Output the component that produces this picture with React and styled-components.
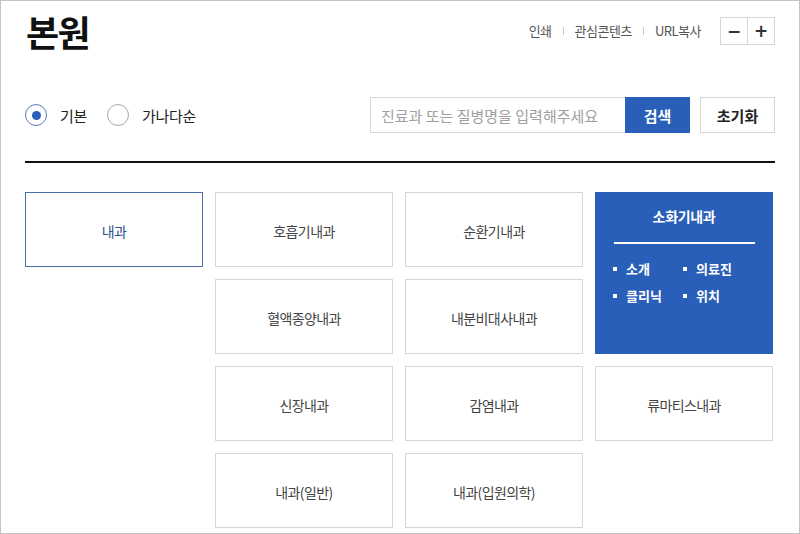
import React from "react";
import styled, { createGlobalStyle } from "styled-components";

const Global = createGlobalStyle`
  html, body { margin: 0; padding: 0; background: #fff; }
  body { font-family: "Noto Sans CJK KR", "Noto Sans", sans-serif; }
  * { box-sizing: border-box; }
`;

const BLUE = "#2a5fb9";

const Frame = styled.div`
  width: 800px;
  height: 534px;
  border: 1px solid #c4c4c4;
  padding: 0 24px;
  overflow: hidden;
  display: flex;
  flex-direction: column;
`;

const Header = styled.div`
  height: 60px;
  display: flex;
  justify-content: space-between;
  align-items: flex-start;
`;

const Title = styled.h1`
  margin: 9px 0 0 1px;
  font-size: 36px;
  line-height: 42px;
  font-weight: 700;
  color: #111;
  letter-spacing: -1.5px;
`;

const Utils = styled.div`
  margin-top: 16px;
  display: flex;
  align-items: center;
  height: 28px;
`;

const UtilLink = styled.span`
  font-size: 13px;
  color: #555;
  letter-spacing: -0.5px;
  line-height: 28px;
`;

const Sep = styled.span`
  width: 1px;
  height: 8px;
  background: #c8c8c8;
  margin: 0 11px;
`;

const ZoomGroup = styled.div`
  display: flex;
  margin-left: 19px;
`;

const ZoomBtn = styled.button`
  width: 28px;
  height: 28px;
  border: 1px solid #d5d5d5;
  margin-left: ${(p) => (p.$first ? "0" : "-1px")};
  background: #fff;
  padding: 0;
  font-family: "DejaVu Sans", sans-serif;
  font-size: 17px;
  font-weight: 700;
  color: #333;
  display: flex;
  align-items: center;
  justify-content: center;
`;

const Controls = styled.div`
  margin-top: 36px;
  height: 36px;
  display: flex;
  justify-content: space-between;
  align-items: center;
`;

const Radios = styled.div`
  display: flex;
  align-items: center;
  gap: 20px;
`;

const RadioLabel = styled.label`
  display: flex;
  align-items: center;
  gap: 13px;
  font-size: 15px;
  color: #222;
  letter-spacing: -0.3px;
`;

const Circle = styled.span`
  width: 22px;
  height: 22px;
  border-radius: 50%;
  border: 1.5px solid ${(p) => (p.$checked ? "#5c7cb8" : "#aaa")};
  display: flex;
  align-items: center;
  justify-content: center;
  &::after {
    content: "";
    width: 9px;
    height: 9px;
    border-radius: 50%;
    background: ${(p) => (p.$checked ? BLUE : "transparent")};
  }
`;

const Search = styled.div`
  display: flex;
  align-items: center;
`;

const Input = styled.input`
  width: 255px;
  height: 36px;
  border: 1px solid #d9d9d9;
  border-right: none;
  padding: 0 0 0 10px;
  font-family: inherit;
  font-size: 15px;
  color: #333;
  outline: none;
  &::placeholder { color: #a0a0a0; }
`;

const Btn = styled.button`
  height: 36px;
  width: ${(p) => p.$w}px;
  margin-left: ${(p) => p.$ml || 0}px;
  border: 1px solid ${(p) => (p.$primary ? BLUE : "#d5d5d5")};
  background: ${(p) => (p.$primary ? BLUE : "#fff")};
  color: ${(p) => (p.$primary ? "#fff" : "#222")};
  font-family: inherit;
  font-size: 15px;
  font-weight: 700;
  padding: 0;
`;

const Divider = styled.div`
  margin-top: 28px;
  height: 2px;
  background: #111;
`;

const Grid = styled.div`
  margin-top: 29px;
  display: grid;
  grid-template-columns: repeat(4, 178px);
  grid-auto-rows: 75px;
  column-gap: 12px;
  row-gap: 12px;
`;

const Card = styled.div`
  grid-column: ${(p) => p.$col};
  grid-row: ${(p) => p.$row};
  border: 1px solid ${(p) => (p.$active ? "#4a6ea8" : "#d6d6d6")};
  color: ${(p) => (p.$active ? "#2d4f8a" : "#444")};
  font-size: 14px;
  letter-spacing: -0.6px;
  padding-top: 2px;
  display: flex;
  align-items: center;
  justify-content: center;
`;

const OpenCard = styled.div`
  grid-column: 4;
  grid-row: 1 / span 2;
  background: ${BLUE};
  color: #fff;
  padding: 14px 18px 0 18px;
`;

const OpenTitle = styled.div`
  text-align: center;
  font-size: 14px;
  font-weight: 700;
  line-height: 20px;
  letter-spacing: -0.3px;
`;

const Rule = styled.div`
  margin: 16px 0 0 1px;
  height: 2px;
  background: #fff;
`;

const SubList = styled.ul`
  list-style: none;
  margin: 15px 0 0 0;
  padding: 0;
  display: grid;
  grid-template-columns: 70px 1fr;
  row-gap: 7px;
`;

const SubItem = styled.li`
  display: flex;
  align-items: center;
  font-size: 13px;
  font-weight: 700;
  line-height: 20px;
  &::before {
    content: "";
    width: 4px;
    height: 4px;
    background: #fff;
    margin-right: 9px;
  }
`;

const cards = [
  { t: "내과", col: 1, row: 1, active: true },
  { t: "호흡기내과", col: 2, row: 1 },
  { t: "순환기내과", col: 3, row: 1 },
  { t: "혈액종양내과", col: 2, row: 2 },
  { t: "내분비대사내과", col: 3, row: 2 },
  { t: "신장내과", col: 2, row: 3 },
  { t: "감염내과", col: 3, row: 3 },
  { t: "류마티스내과", col: 4, row: 3 },
  { t: "내과(일반)", col: 2, row: 4 },
  { t: "내과(입원의학)", col: 3, row: 4 },
];

export default function App() {
  return (
    <>
      <Global />
      <Frame>
        <Header>
          <Title>본원</Title>
          <Utils>
            <UtilLink>인쇄</UtilLink>
            <Sep />
            <UtilLink>관심콘텐츠</UtilLink>
            <Sep />
            <UtilLink>URL복사</UtilLink>
            <ZoomGroup>
              <ZoomBtn $first>−</ZoomBtn>
              <ZoomBtn>+</ZoomBtn>
            </ZoomGroup>
          </Utils>
        </Header>
        <Controls>
          <Radios>
            <RadioLabel>
              <Circle $checked />
              기본
            </RadioLabel>
            <RadioLabel>
              <Circle />
              가나다순
            </RadioLabel>
          </Radios>
          <Search>
            <Input placeholder="진료과 또는 질병명을 입력해주세요" />
            <Btn $primary $w={65}>검색</Btn>
            <Btn $w={75} $ml={10}>초기화</Btn>
          </Search>
        </Controls>
        <Divider />
        <Grid>
          {cards.map((c) => (
            <Card key={c.t} $col={c.col} $row={c.row} $active={c.active}>
              {c.t}
            </Card>
          ))}
          <OpenCard>
            <OpenTitle>소화기내과</OpenTitle>
            <Rule />
            <SubList>
              <SubItem>소개</SubItem>
              <SubItem>의료진</SubItem>
              <SubItem>클리닉</SubItem>
              <SubItem>위치</SubItem>
            </SubList>
          </OpenCard>
        </Grid>
      </Frame>
    </>
  );
}
